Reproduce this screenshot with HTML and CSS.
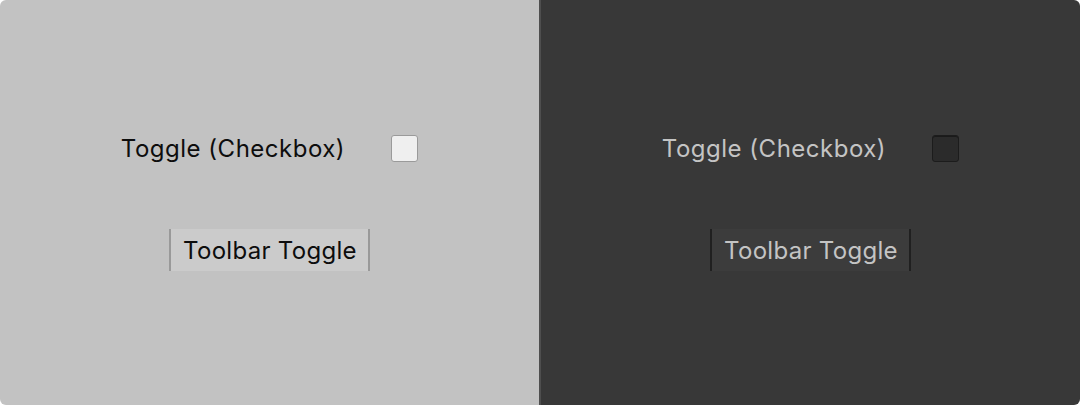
FILE: index.html
```html
<!DOCTYPE html>
<html lang="en">
<head>
  <meta charset="UTF-8">
  <title>Toggle Styles</title>
  <link rel="stylesheet" href="styles.css">
</head>
<body>
  <div class="frame">
    <div class="panel light">
      <div class="row">
        <span class="label">Toggle (Checkbox)</span>
        <span class="checkbox"></span>
      </div>
      <div class="toolbar-toggle">Toolbar Toggle</div>
    </div>
    <div class="panel dark">
      <div class="row">
        <span class="label">Toggle (Checkbox)</span>
        <span class="checkbox"></span>
      </div>
      <div class="toolbar-toggle">Toolbar Toggle</div>
    </div>
  </div>
</body>
</html>
```

FILE: styles.css
```css
body {
  margin: 0;
  background: #ffffff;
  font-family: Inter, "Noto Sans", sans-serif;
}

.frame {
  display: flex;
  width: 1080px;
  height: 405px;
  border-radius: 6px;
  overflow: hidden;
}

.panel {
  flex: 1;
  display: flex;
  flex-direction: column;
  align-items: center;
  justify-content: center;
  gap: 66px;
  box-sizing: border-box;
}

.row {
  display: flex;
  align-items: center;
  gap: 46px;
}

.label {
  font-size: 24px;
  letter-spacing: 0.5px;
}

.checkbox {
  width: 27px;
  height: 27px;
  border-radius: 3px;
  box-sizing: border-box;
}

.toolbar-toggle {
  height: 42px;
  display: flex;
  align-items: center;
  padding: 0 11px 0 12px;
  font-size: 24px;
  letter-spacing: 0.3px;
  box-sizing: border-box;
}

/* light side */
.light {
  background: #c2c2c2;
  color: #0d0d0d;
}

.light .checkbox {
  background: #efefef;
  border: 1px solid #9a9a9a;
}

.light .toolbar-toggle {
  background: #cbcbcb;
  border-left: 2px solid #999999;
  border-right: 2px solid #999999;
}

/* dark side */
.dark {
  background: #383838;
  color: #c4c4c4;
  border-left: 2px solid #4e4e4e;
}

.dark .checkbox {
  background: #2b2b2b;
  border: 1px solid #1c1c1c;
  box-shadow: inset 0 1px 0 #1a1a1a;
}

.dark .toolbar-toggle {
  background: #3c3c3c;
  border-left: 2px solid #202020;
  border-right: 2px solid #202020;
}
```
